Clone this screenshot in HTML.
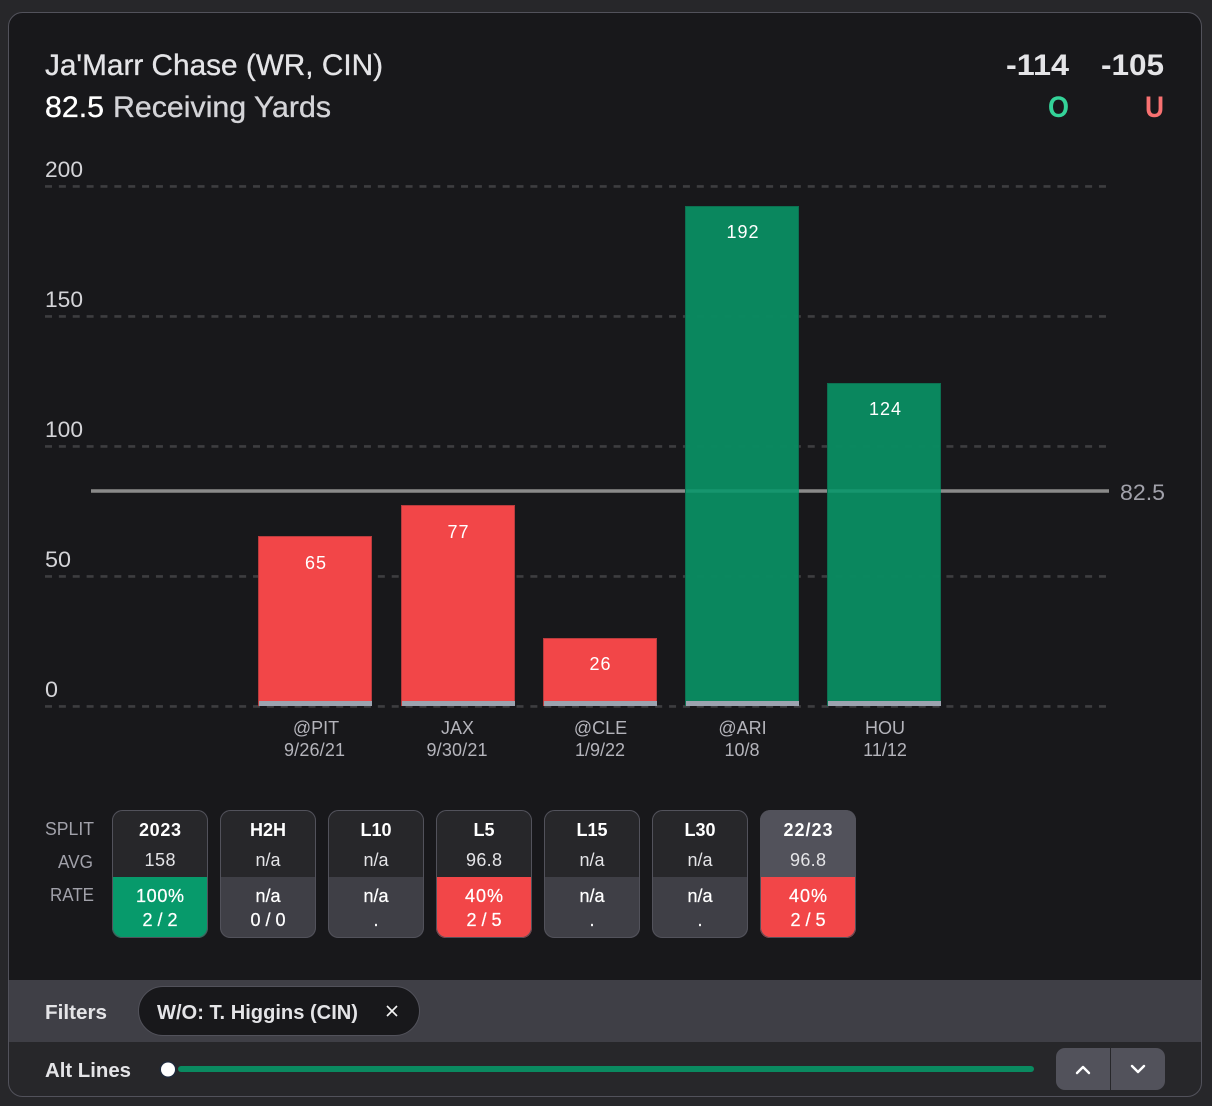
<!DOCTYPE html>
<html lang="en">
<head>
<meta charset="utf-8">
<title>Ja'Marr Chase Receiving Yards</title>
<style>
html,body{margin:0;padding:0;width:1212px;height:1106px;overflow:hidden;background:#27272a}
svg{display:block;position:absolute;left:0;top:0}
text{font-family:"Liberation Sans",Arial,sans-serif}
.hd{font-size:18px;font-weight:700;fill:#fff;text-anchor:middle}
.av{font-size:18px;fill:#e4e4e7;text-anchor:middle}
.rt{font-size:18px;fill:#fff;text-anchor:middle;stroke:#fff;stroke-width:.25px}
.lb{font-size:18px;fill:#a1a1aa}
.yl{font-size:22px;fill:#d4d4d8}
.bv{font-size:18px;fill:#fff;text-anchor:middle}
.xl{font-size:18px;fill:#b4b4bb;text-anchor:middle}
.md{stroke-width:.35px}
</style>
</head>
<body>
<svg width="1212" height="1106" viewBox="0 0 1212 1106" xmlns="http://www.w3.org/2000/svg">
<defs>
<clipPath id="card"><rect x="8.5" y="12.5" width="1193" height="1084" rx="14"/></clipPath>
<clipPath id="tile"><rect x="0" y="0" width="96" height="128" rx="10"/></clipPath>
</defs>
<rect width="1212" height="1106" fill="#27272a"/>
<rect x="8.5" y="12.5" width="1193" height="1084" rx="14" fill="#18181b"/>
<g clip-path="url(#card)">
<rect x="8" y="980" width="1194" height="62" fill="#3f3f46"/>
<rect x="8" y="1042" width="1194" height="56" fill="#27272a"/>
</g>
<rect x="8.5" y="12.5" width="1193" height="1084" rx="14" fill="none" stroke="#52525b"/>

<text class="md" x="45" y="75" font-size="30" fill="#e4e4e7" stroke="#e4e4e7" textLength="338" lengthAdjust="spacingAndGlyphs">Ja'Marr Chase (WR, CIN)</text>
<text class="md" x="45" y="117" font-size="30" fill="#fff" stroke="#fff" textLength="59" lengthAdjust="spacingAndGlyphs">82.5</text>
<text class="md" x="113" y="117" font-size="30" fill="#d4d4d8" stroke="#d4d4d8" textLength="218" lengthAdjust="spacingAndGlyphs">Receiving Yards</text>
<text x="1006" y="75" font-size="30" font-weight="700" fill="#e4e4e7" textLength="63" lengthAdjust="spacingAndGlyphs">-114</text>
<text x="1101" y="75" font-size="30" font-weight="700" fill="#e4e4e7" textLength="63" lengthAdjust="spacingAndGlyphs">-105</text>
<text x="1048" y="117" font-size="30" font-weight="700" fill="#34d399" textLength="21" lengthAdjust="spacingAndGlyphs">O</text>
<text x="1145" y="117" font-size="30" font-weight="700" fill="#f87171" textLength="19" lengthAdjust="spacingAndGlyphs">U</text>

<g stroke="#3d3d40" stroke-width="2.6" stroke-dasharray="7 6.868">
<line x1="45" y1="186.4" x2="1106" y2="186.4"/>
<line x1="45" y1="316.4" x2="1106" y2="316.4"/>
<line x1="45" y1="446.4" x2="1106" y2="446.4"/>
<line x1="45" y1="576.4" x2="1106" y2="576.4"/>
<line x1="45" y1="706.4" x2="1106" y2="706.4"/>
</g>
<line x1="91" y1="491" x2="1109" y2="491" stroke="#8a8a8a" stroke-width="3.4"/>

<text class="yl" x="45" y="177" textLength="38" lengthAdjust="spacingAndGlyphs">200</text>
<text class="yl" x="45" y="307" textLength="38" lengthAdjust="spacingAndGlyphs">150</text>
<text class="yl" x="45" y="437" textLength="38" lengthAdjust="spacingAndGlyphs">100</text>
<text class="yl" x="45" y="567" textLength="26" lengthAdjust="spacingAndGlyphs">50</text>
<text class="yl" x="45" y="697" textLength="13" lengthAdjust="spacingAndGlyphs">0</text>
<text x="1120" y="500" font-size="22" fill="#a1a1aa" textLength="45" lengthAdjust="spacingAndGlyphs">82.5</text>

<g stroke-width="1">
<rect x="258.5" y="536.5" width="113" height="169" fill="#f24648" stroke="#b93c3e"/>
<rect x="401.5" y="505.5" width="113" height="200" fill="#f24648" stroke="#b93c3e"/>
<rect x="543.5" y="638.5" width="113" height="67" fill="#f24648" stroke="#b93c3e"/>
<rect x="685.5" y="206.5" width="113" height="499" fill="#0a8a60" fill-opacity=".98" stroke="#0c7051"/>
<rect x="827.5" y="383.5" width="113" height="322" fill="#0a8a60" fill-opacity=".98" stroke="#0c7051"/>
</g>
<rect x="259" y="701" width="113" height="5" fill="#9ca3af"/>
<rect x="402" y="701" width="113" height="5" fill="#9ca3af"/>
<rect x="544" y="701" width="113" height="5" fill="#9ca3af"/>
<rect x="686" y="701" width="113" height="5" fill="#9ca3af"/>
<rect x="828" y="701" width="113" height="5" fill="#9ca3af"/>
<line x1="686" y1="491" x2="799" y2="491" stroke="#16966e" stroke-width="3.4"/>
<line x1="828" y1="491" x2="941" y2="491" stroke="#16966e" stroke-width="3.4"/>

<text class="bv" x="315.5" y="569" textLength="21">65</text>
<text class="bv" x="458" y="538" textLength="21">77</text>
<text class="bv" x="600" y="670" textLength="21">26</text>
<text class="bv" x="742.5" y="238" textLength="32">192</text>
<text class="bv" x="885" y="415" textLength="32">124</text>

<text class="xl" x="316" y="734">@PIT</text><text class="xl" x="314.5" y="756" textLength="61">9/26/21</text>
<text class="xl" x="457.5" y="734">JAX</text><text class="xl" x="457" y="756" textLength="61">9/30/21</text>
<text class="xl" x="600.5" y="734">@CLE</text><text class="xl" x="600" y="756">1/9/22</text>
<text class="xl" x="742.5" y="734">@ARI</text><text class="xl" x="742" y="756">10/8</text>
<text class="xl" x="885" y="734">HOU</text><text class="xl" x="885" y="756">11/12</text>

<text class="lb" x="45" y="835" textLength="49" lengthAdjust="spacingAndGlyphs">SPLIT</text>
<text class="lb" x="58" y="868" textLength="35" lengthAdjust="spacingAndGlyphs">AVG</text>
<text class="lb" x="50" y="901" textLength="44" lengthAdjust="spacingAndGlyphs">RATE</text>

<!-- tiles -->
<g transform="translate(112,810)">
<g clip-path="url(#tile)"><rect width="96" height="67" fill="#27272a"/><rect y="67" width="96" height="61" fill="#079a6b"/></g>
<rect x=".5" y=".5" width="95" height="127" rx="10" fill="none" stroke="#52525b"/>
<text class="hd" x="48" y="26" textLength="42">2023</text><text class="av" x="48" y="56" textLength="31">158</text><text class="rt" x="48" y="92" textLength="48">100%</text><text class="rt" x="48" y="116">2 / 2</text>
</g>
<g transform="translate(220,810)">
<g clip-path="url(#tile)"><rect width="96" height="67" fill="#27272a"/><rect y="67" width="96" height="61" fill="#3f3f46"/></g>
<rect x=".5" y=".5" width="95" height="127" rx="10" fill="none" stroke="#52525b"/>
<text class="hd" x="48" y="26">H2H</text><text class="av" x="48" y="56">n/a</text><text class="rt" x="48" y="92">n/a</text><text class="rt" x="48" y="116">0 / 0</text>
</g>
<g transform="translate(328,810)">
<g clip-path="url(#tile)"><rect width="96" height="67" fill="#27272a"/><rect y="67" width="96" height="61" fill="#3f3f46"/></g>
<rect x=".5" y=".5" width="95" height="127" rx="10" fill="none" stroke="#52525b"/>
<text class="hd" x="48" y="26">L10</text><text class="av" x="48" y="56">n/a</text><text class="rt" x="48" y="92">n/a</text><text class="rt" x="48" y="116">.</text>
</g>
<g transform="translate(436,810)">
<g clip-path="url(#tile)"><rect width="96" height="67" fill="#27272a"/><rect y="67" width="96" height="61" fill="#f24648"/></g>
<rect x=".5" y=".5" width="95" height="127" rx="10" fill="none" stroke="#52525b"/>
<text class="hd" x="48" y="26">L5</text><text class="av" x="48" y="56" textLength="36">96.8</text><text class="rt" x="48" y="92" textLength="38">40%</text><text class="rt" x="48" y="116">2 / 5</text>
</g>
<g transform="translate(544,810)">
<g clip-path="url(#tile)"><rect width="96" height="67" fill="#27272a"/><rect y="67" width="96" height="61" fill="#3f3f46"/></g>
<rect x=".5" y=".5" width="95" height="127" rx="10" fill="none" stroke="#52525b"/>
<text class="hd" x="48" y="26">L15</text><text class="av" x="48" y="56">n/a</text><text class="rt" x="48" y="92">n/a</text><text class="rt" x="48" y="116">.</text>
</g>
<g transform="translate(652,810)">
<g clip-path="url(#tile)"><rect width="96" height="67" fill="#27272a"/><rect y="67" width="96" height="61" fill="#3f3f46"/></g>
<rect x=".5" y=".5" width="95" height="127" rx="10" fill="none" stroke="#52525b"/>
<text class="hd" x="48" y="26">L30</text><text class="av" x="48" y="56">n/a</text><text class="rt" x="48" y="92">n/a</text><text class="rt" x="48" y="116">.</text>
</g>
<g transform="translate(760,810)">
<g clip-path="url(#tile)"><rect width="96" height="67" fill="#52525b"/><rect y="67" width="96" height="61" fill="#f24648"/></g>
<rect x=".5" y=".5" width="95" height="127" rx="10" fill="none" stroke="#52525b"/>
<text class="hd" x="48" y="26" textLength="49">22/23</text><text class="av" x="48" y="56" textLength="36">96.8</text><text class="rt" x="48" y="92" textLength="38">40%</text><text class="rt" x="48" y="116">2 / 5</text>
</g>

<text x="45" y="1019" font-size="20" font-weight="700" fill="#e4e4e7" textLength="62" lengthAdjust="spacingAndGlyphs">Filters</text>
<rect x="138.5" y="986.5" width="281" height="49" rx="24.5" fill="#18181b" stroke="#52525b"/>
<text x="157" y="1019" font-size="20" font-weight="700" fill="#e4e4e7" textLength="201" lengthAdjust="spacingAndGlyphs">W/O: T. Higgins (CIN)</text>
<path d="M387 1006 L397 1016 M397 1006 L387 1016" stroke="#f4f4f5" stroke-width="1.6" fill="none"/>

<text x="45" y="1077" font-size="20" font-weight="700" fill="#e4e4e7" textLength="86" lengthAdjust="spacingAndGlyphs">Alt Lines</text>
<rect x="178" y="1066" width="856" height="6" rx="3" fill="#0a8a60"/>
<circle cx="168" cy="1069.5" r="8.5" fill="#1e293b"/>
<circle cx="168" cy="1069.5" r="7" fill="#fff"/>

<rect x="1056" y="1048" width="109" height="42" rx="9" fill="#52525b"/>
<rect x="1110" y="1048" width="1" height="42" fill="#27272a"/>
<path d="M1077 1073 L1083 1067 L1089 1073" stroke="#fff" stroke-width="2.4" fill="none" stroke-linecap="round" stroke-linejoin="round"/>
<path d="M1132 1066 L1138 1072 L1144 1066" stroke="#fff" stroke-width="2.4" fill="none" stroke-linecap="round" stroke-linejoin="round"/>
</svg>
</body>
</html>
